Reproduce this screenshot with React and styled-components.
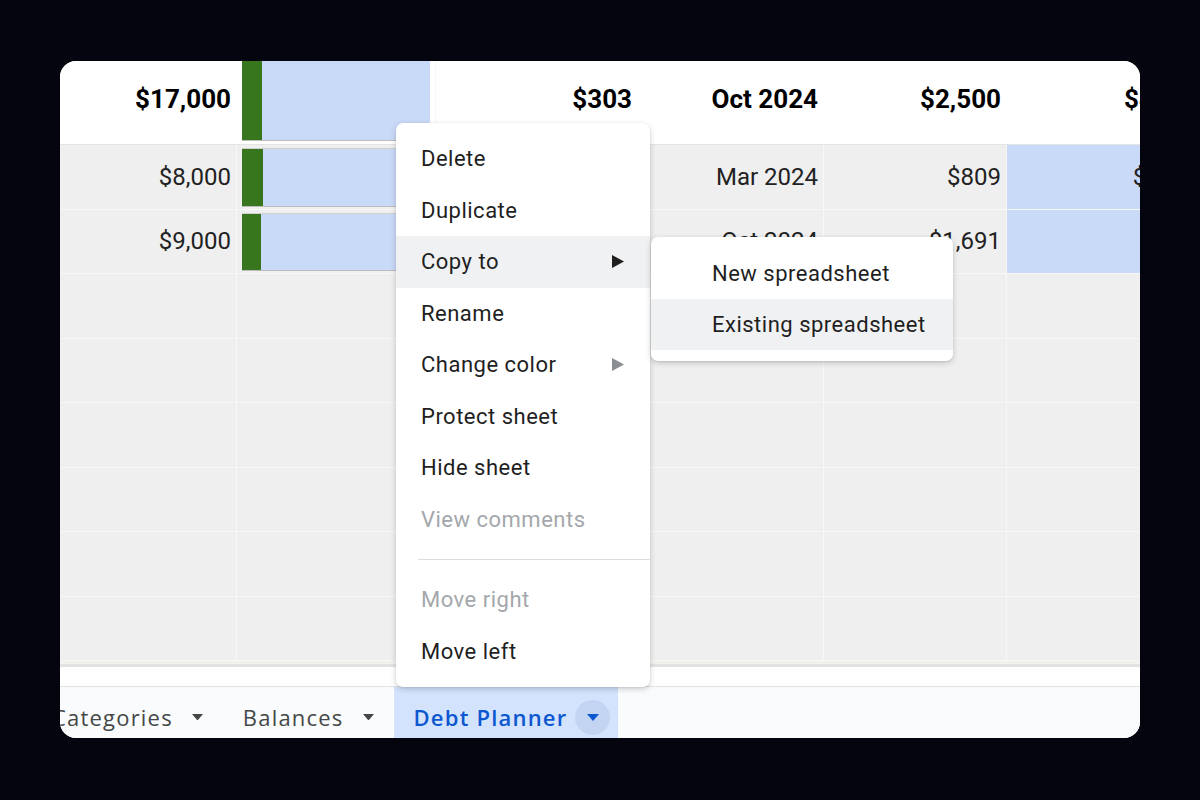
import styled, { createGlobalStyle } from 'styled-components';

const COLUMNS = '177px 199px 202px 186px 183px 204px';

const GlobalStyle = createGlobalStyle`
    html, body {
        margin: 0;
        padding: 0;
        background: #05050f;
    }
    body {
        font-family: Roboto, "Noto Sans", "Liberation Sans", sans-serif;
    }
`;

const Stage = styled.div`
    width: 1200px;
    height: 800px;
    box-sizing: border-box;
    padding: 61px 60px 0;
    background: #05050f;
`;

const Card = styled.div`
    position: relative;
    width: 1080px;
    height: 677px;
    border-radius: 16px;
    overflow: hidden;
    background: #fff;
    display: flex;
    flex-direction: column;
`;

const Sheet = styled.div`
    display: flex;
    flex-direction: column;
    overflow: hidden;
`;

const Row = styled.div`
    display: grid;
    grid-template-columns: ${COLUMNS};
    height: ${props => props.$height}px;
    flex-shrink: 0;
    background: ${props => (props.$header ? '#fff' : '#efefef')};
    border-bottom: ${props => (props.$header ? '1px solid #e4e4e4' : '1px solid #f7f7f3')};
    box-sizing: border-box;
`;

const Cell = styled.div`
    display: flex;
    align-items: center;
    justify-content: flex-end;
    padding: 0 5px ${props => (props.$header ? '7px' : '0')} 0;
    box-sizing: border-box;
    border-right: 1px solid ${props => (props.$header ? 'transparent' : '#f7f7f3')};
    background: ${props => (props.$fill ? '#c9daf8' : 'transparent')};
    font-size: ${props => (props.$header ? '26px' : '24px')};
    font-weight: ${props => (props.$header ? 700 : 400)};
    color: ${props => (props.$header ? '#000' : '#222')};
    white-space: nowrap;
    overflow: hidden;
`;

const BarCell = styled.div`
    display: flex;
    padding: ${props => (props.$header ? '0 5px 3px 5px' : '3px 0 2px 5px')};
    border-right: 1px solid #f7f7f3;
    box-sizing: border-box;
`;

const Bar = styled.div`
    flex: 1;
    display: flex;
    border-bottom: 1px solid #bdbdbd;
    border-top: ${props => (props.$header ? 'none' : '1px solid #d0d0d0')};
`;

const BarPaid = styled.div`
    width: ${props => props.$width}px;
    background: #38761d;
`;

const BarLeft = styled.div`
    flex: 1;
    background: #c9daf8;
`;

const PartialRow = styled.div`
    height: 3px;
    background: #f1f1ee;
    border-bottom: 3px solid #e2e2e2;
`;

const Gap = styled.div`
    height: 19px;
    background: #fff;
    border-bottom: 1px solid #e1e3e6;
`;

const TabBar = styled.div`
    height: 51px;
    background: #f9fbfd;
    display: flex;
    align-items: stretch;
    margin-left: -28px;
`;

const Tab = styled.div`
    display: flex;
    align-items: center;
    gap: ${props => (props.$active ? '8px' : '19px')};
    padding: 9px ${props => (props.$active ? '8px' : '20px')} 0 20px;
    background: ${props => (props.$active ? '#d3e3fd' : 'transparent')};
    color: ${props => (props.$active ? '#0b57d0' : '#444746')};
    font-family: "Open Sans", Roboto, sans-serif;
    font-size: 22px;
    font-weight: ${props => (props.$active ? 600 : 400)};
    letter-spacing: 1.2px;
    white-space: nowrap;
`;

const TabButton = styled.div`
    width: 35px;
    height: 35px;
    border-radius: 50%;
    background: #c2d4f2;
    display: flex;
    align-items: center;
    justify-content: center;
`;

const Menu = styled.div`
    position: absolute;
    left: 336px;
    top: 62px;
    width: 254px;
    padding: 10px 0;
    background: #fff;
    border-radius: 7px;
    box-shadow: 0 2px 6px rgba(0, 0, 0, 0.18), 0 1px 2px rgba(0, 0, 0, 0.08);
    box-sizing: border-box;
`;

const SubMenu = styled(Menu)`
    left: 591px;
    top: 176px;
    width: 302px;
    padding: 10px 0 11px;
`;

const Item = styled.div`
    height: ${props => props.$height || 51.5}px;
    display: flex;
    align-items: center;
    justify-content: space-between;
    padding: 0 26px 0 ${props => props.$indent || 25}px;
    background: ${props => (props.$hover ? '#f0f1f2' : 'transparent')};
    color: ${props => (props.$disabled ? '#a4a7ab' : '#1f1f1f')};
    font-size: 22px;
    letter-spacing: 0.5px;
    white-space: nowrap;
    box-sizing: border-box;
`;

const Separator = styled.div`
    height: 29px;
    display: flex;
    align-items: center;
    padding-left: 22px;

    &::after {
        content: '';
        flex: 1;
        height: 1px;
        background: #dadce0;
    }
`;

function Caret({ color = '#444746', size = 11 }) {
    return (
        <svg width={size} height={size / 2 + 1} viewBox="0 0 12 7">
            <polygon points="0,0 12,0 6,7" fill={color} />
        </svg>
    );
}

function SubArrow({ color }) {
    return (
        <svg width="12" height="13" viewBox="0 0 12 13">
            <polygon points="0,0 12,6.5 0,13" fill={color} />
        </svg>
    );
}

const dataRows = [
    { total: '$8,000', paid: 21, date: 'Mar 2024', amount: '$809', next: '$1,500' },
    { total: '$9,000', paid: 19, date: 'Oct 2024', amount: '$1,691', next: '' },
];

const menuItems = [
    { label: 'Delete' },
    { label: 'Duplicate' },
    { label: 'Copy to', arrow: '#1f1f1f', hover: true },
    { label: 'Rename' },
    { label: 'Change color', arrow: '#8a8d91' },
    { label: 'Protect sheet' },
    { label: 'Hide sheet' },
    { label: 'View comments', disabled: true },
];

export default function App() {
    return (
        <Stage>
            <GlobalStyle />
            <Card>
                <Sheet>
                    <Row $header $height={84}>
                        <Cell $header>$17,000</Cell>
                        <BarCell $header>
                            <Bar $header>
                                <BarPaid $width={20} />
                                <BarLeft />
                            </Bar>
                        </BarCell>
                        <Cell $header>$303</Cell>
                        <Cell $header>Oct 2024</Cell>
                        <Cell $header>$2,500</Cell>
                        <Cell $header>$4,000</Cell>
                    </Row>
                    {dataRows.map(row => (
                        <Row key={row.total} $height={64.5}>
                            <Cell>{row.total}</Cell>
                            <BarCell>
                                <Bar>
                                    <BarPaid $width={row.paid} />
                                    <BarLeft />
                                </Bar>
                            </BarCell>
                            <Cell />
                            <Cell>{row.date}</Cell>
                            <Cell>{row.amount}</Cell>
                            <Cell $fill>{row.next}</Cell>
                        </Row>
                    ))}
                    {Array.from({ length: 6 }).map((_, i) => (
                        <Row key={i} $height={64.5}>
                            <Cell />
                            <Cell />
                            <Cell />
                            <Cell />
                            <Cell />
                            <Cell />
                        </Row>
                    ))}
                    <PartialRow />
                </Sheet>
                <Gap />
                <TabBar>
                    <Tab>
                        Categories
                        <Caret />
                    </Tab>
                    <Tab>
                        Balances
                        <Caret />
                    </Tab>
                    <Tab $active>
                        Debt Planner
                        <TabButton>
                            <Caret color="#0b57d0" size={12} />
                        </TabButton>
                    </Tab>
                </TabBar>

                <Menu>
                    {menuItems.map(item => (
                        <Item key={item.label} $hover={item.hover} $disabled={item.disabled}>
                            {item.label}
                            {item.arrow && <SubArrow color={item.arrow} />}
                        </Item>
                    ))}
                    <Separator />
                    <Item $disabled>Move right</Item>
                    <Item>Move left</Item>
                </Menu>

                <SubMenu>
                    <Item $indent={61} $height={52}>New spreadsheet</Item>
                    <Item $indent={61} $height={51} $hover>Existing spreadsheet</Item>
                </SubMenu>
            </Card>
        </Stage>
    );
}
